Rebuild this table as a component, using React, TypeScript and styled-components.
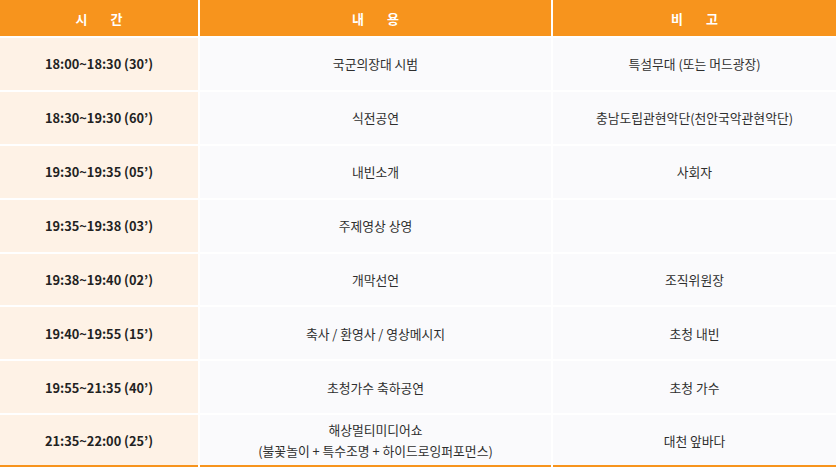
import React from "react";
import styled, { createGlobalStyle } from "styled-components";

interface ScheduleRow {
    time: string;
    content: string[];
    note: string;
}

const rows: ScheduleRow[] = [
    { time: "18:00~18:30 (30’)", content: ["국군의장대 시범"], note: "특설무대 (또는 머드광장)" },
    { time: "18:30~19:30 (60’)", content: ["식전공연"], note: "충남도립관현악단(천안국악관현악단)" },
    { time: "19:30~19:35 (05’)", content: ["내빈소개"], note: "사회자" },
    { time: "19:35~19:38 (03’)", content: ["주제영상 상영"], note: "" },
    { time: "19:38~19:40 (02’)", content: ["개막선언"], note: "조직위원장" },
    { time: "19:40~19:55 (15’)", content: ["축사 / 환영사 / 영상메시지"], note: "초청 내빈" },
    { time: "19:55~21:35 (40’)", content: ["초청가수 축하공연"], note: "초청 가수" },
    {
        time: "21:35~22:00 (25’)",
        content: ["해상멀티미디어쇼", "(불꽃놀이 + 특수조명 + 하이드로잉퍼포먼스)"],
        note: "대천 앞바다",
    },
];

const GlobalStyle = createGlobalStyle`
    body {
        margin: 0;
        background: #ffffff;
        font-family: "Noto Sans CJK KR", "Noto Sans", sans-serif;
        color: #333333;
    }
`;

const Table = styled.div`
    display: grid;
    grid-template-columns: 198px 351px 1fr;
    grid-template-rows: 36px;
    grid-auto-rows: 51.875px;
    gap: 2px;
    width: 836px;
`;

const HeadCell = styled.div`
    display: flex;
    align-items: center;
    justify-content: center;
    background: #f7941d;
    color: #ffffff;
    font-size: 13px;
    font-weight: 700;
    word-spacing: 20px;
`;

const Cell = styled.div<{ $time?: boolean; $last?: boolean }>`
    display: flex;
    flex-direction: column;
    align-items: center;
    justify-content: center;
    text-align: center;
    background: ${(p) => (p.$time ? "#fef2e6" : "#fafafc")};
    font-size: 12.8px;
    font-weight: ${(p) => (p.$time ? 700 : 400)};
    color: ${(p) => (p.$time ? "#222222" : "#2e2e2e")};
    line-height: 21px;
    border-bottom: ${(p) => (p.$last ? "2px solid #f7941d" : "none")};
`;

const App: React.FC = () => {
    return (
        <>
            <GlobalStyle />
            <Table>
                <HeadCell>시 간</HeadCell>
                <HeadCell>내 용</HeadCell>
                <HeadCell>비 고</HeadCell>
                {rows.map((row, index) => {
                    const last = index === rows.length - 1;
                    return (
                        <React.Fragment key={index}>
                            <Cell $time $last={last}>{row.time}</Cell>
                            <Cell $last={last}>
                                {row.content.map((line, i) => (
                                    <span key={i}>{line}</span>
                                ))}
                            </Cell>
                            <Cell $last={last}>{row.note}</Cell>
                        </React.Fragment>
                    );
                })}
            </Table>
        </>
    );
};

export default App;
